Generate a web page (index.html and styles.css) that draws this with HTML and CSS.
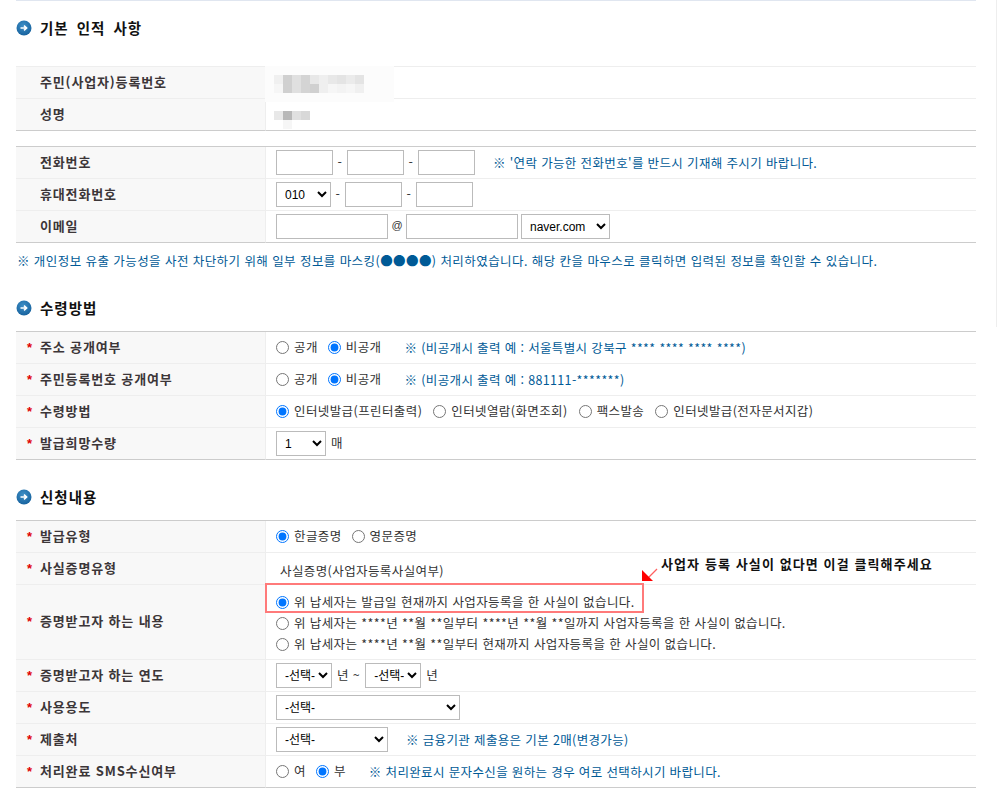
FILE: index.html
```html
<!DOCTYPE html>
<html lang="ko">
<head>
<meta charset="utf-8">
<title>증명 발급 신청</title>
<link rel="stylesheet" href="styles.css">
</head>
<body>
<div class="edge"></div>
<main class="page">
  <svg class="defs" width="0" height="0" aria-hidden="true">
    <defs>
      <radialGradient id="ball" cx="45%" cy="35%" r="70%">
        <stop offset="0" stop-color="#3f8fc6"/>
        <stop offset="1" stop-color="#14609c"/>
      </radialGradient>
      <symbol id="go" viewBox="0 0 16 16">
        <circle cx="8" cy="8" r="7.5" fill="url(#ball)"/>
        <path d="M4.5 8h5.5M8 5.6 10.6 8 8 10.4" fill="none" stroke="#fff" stroke-width="1.6"/>
      </symbol>
    </defs>
  </svg>

  <div class="heading first"><svg class="ico"><use href="#go"/></svg><h2>기본 인적 사항</h2></div>
  <table class="form top-light">
    <tr><th class="plain">주민(사업자)등록번호</th><td class="masked">
      <div class="halo"></div>
      <div class="mosaic">
        <i class="g0"></i><i class="g1"></i><i class="g2"></i><i class="g3"></i><i class="g4"></i><i class="g5"></i><i class="g4"></i><i class="g6"></i><i class="g7"></i><i class="g6"></i>
        <i class="g8"></i><i class="g1"></i><i class="g2"></i><i class="g3"></i><i class="g1"></i><i class="g5"></i><i class="g8"></i><i class="g9"></i><i class="g8"></i><i class="g0"></i>
      </div></td></tr>
    <tr><th class="plain">성명</th><td class="masked low">
      <div class="mosaic name">
        <i class="g4"></i><i class="ga"></i><i class="g2"></i><i class="gb"></i>
        <i class="gw"></i><i class="g8"></i><i class="gw"></i><i class="gw"></i>
      </div></td></tr>
  </table>

  <table class="form second">
    <tr><th class="plain">전화번호</th><td><div class="line">
      <input class="box w57" type="text"><span class="sep">-</span><input class="box w57" type="text"><span class="sep">-</span><input class="box w57" type="text">
      <span class="note n18">※ '연락 가능한 전화번호'를 반드시 기재해 주시기 바랍니다.</span></div></td></tr>
    <tr><th class="plain">휴대전화번호</th><td><div class="line">
      <select class="box w55"><option>010</option></select><span class="sep">-</span><input class="box w57" type="text"><span class="sep">-</span><input class="box w57" type="text"></div></td></tr>
    <tr><th class="plain">이메일</th><td><div class="line">
      <input class="box w112" type="text"><span class="at">@</span><input class="box w112" type="text"><select class="box w89 mail"><option>naver.com</option></select></div></td></tr>
  </table>
  <p class="notice">※ 개인정보 유출 가능성을 사전 차단하기 위해 일부 정보를 마스킹(●●●●) 처리하였습니다. 해당 칸을 마우스로 클릭하면 입력된 정보를 확인할 수 있습니다.</p>

  <div class="heading"><svg class="ico"><use href="#go"/></svg><h2>수령방법</h2></div>
  <table class="form">
    <tr><th><b class="req">*</b>주소 공개여부</th><td><div class="line">
      <input class="rd" type="radio" name="a"><label>공개</label><input class="rd" type="radio" name="a" checked><label>비공개</label>
      <span class="note n13">※ (비공개시 출력 예 : 서울특별시 강북구 **** **** **** ****)</span></div></td></tr>
    <tr><th><b class="req">*</b>주민등록번호 공개여부</th><td><div class="line">
      <input class="rd" type="radio" name="b"><label>공개</label><input class="rd" type="radio" name="b" checked><label>비공개</label>
      <span class="note n13">※ (비공개시 출력 예 : 881111-*******)</span></div></td></tr>
    <tr><th><b class="req">*</b>수령방법</th><td><div class="line spread">
      <input class="rd" type="radio" name="c" checked><label>인터넷발급(프린터출력)</label><input class="rd" type="radio" name="c"><label>인터넷열람(화면조회)</label><input class="rd" type="radio" name="c"><label>팩스발송</label><input class="rd" type="radio" name="c"><label>인터넷발급(전자문서지갑)</label></div></td></tr>
    <tr><th><b class="req">*</b>발급희망수량</th><td><div class="line">
      <select class="box w50"><option>1</option></select><span class="unit">매</span></div></td></tr>
  </table>

  <div class="heading third"><svg class="ico"><use href="#go"/></svg><h2>신청내용</h2></div>
  <table class="form">
    <tr><th><b class="req">*</b>발급유형</th><td><div class="line">
      <input class="rd" type="radio" name="d" checked><label>한글증명</label><input class="rd" type="radio" name="d"><label>영문증명</label></div></td></tr>
    <tr><th><b class="req">*</b>사실증명유형</th><td><div class="line fixed">사실증명(사업자등록사실여부)</div></td></tr>
    <tr class="tall"><th><b class="req">*</b>증명받고자 하는 내용</th><td class="anchor">
      <div class="stack">
        <div class="line"><input class="rd" type="radio" name="e" checked><label>위 납세자는 발급일 현재까지 사업자등록을 한 사실이 없습니다.</label></div>
        <div class="line"><input class="rd" type="radio" name="e"><label>위 납세자는 ****년 **월 **일부터 ****년 **월 **일까지 사업자등록을 한 사실이 없습니다.</label></div>
        <div class="line"><input class="rd" type="radio" name="e"><label>위 납세자는 ****년 **월 **일부터 현재까지 사업자등록을 한 사실이 없습니다.</label></div>
      </div>
      <div class="redbox"></div>
      <svg class="arrow" width="20" height="20" viewBox="0 0 20 20"><path d="M6 14 17 3" stroke="#ff6060" stroke-width="1.2"/><path d="M2 4v11h11z" fill="#ff0000"/></svg>
      <strong class="callout">사업자 등록 사실이 없다면 이걸 클릭해주세요</strong>
    </td></tr>
    <tr><th><b class="req">*</b>증명받고자 하는 연도</th><td><div class="line">
      <select class="box w56"><option>-선택-</option></select><span class="unit">년 ~</span><select class="box w56"><option>-선택-</option></select><span class="unit">년</span></div></td></tr>
    <tr><th><b class="req">*</b>사용용도</th><td><div class="line"><select class="box w184"><option>-선택-</option></select></div></td></tr>
    <tr><th><b class="req">*</b>제출처</th><td><div class="line"><select class="box w112"><option>-선택-</option></select>
      <span class="note n18">※ 금융기관 제출용은 기본 2매(변경가능)</span></div></td></tr>
    <tr><th><b class="req">*</b>처리완료 SMS수신여부</th><td><div class="line">
      <input class="rd" type="radio" name="f"><label>여</label><input class="rd" type="radio" name="f" checked><label>부</label>
      <span class="note n13">※ 처리완료시 문자수신을 원하는 경우 여로 선택하시기 바랍니다.</span></div></td></tr>
  </table>
</main>
</body>
</html>
```
FILE: styles.css
```css
* { box-sizing: border-box; }
html, body { margin: 0; padding: 0; background: #fff; overflow: hidden; }
body { font-family: "Noto Sans CJK KR", "Liberation Sans", sans-serif; font-size: 12px; color: #333; height: 790px; position: relative; }
.edge { position: absolute; right: 0; top: 0; width: 1px; height: 327px; background: #eeeeee; }
.page { width: 960px; margin-left: 16px; border-top: 1px solid #e0e6f0; }
.defs { position: absolute; }

.heading { display: flex; align-items: center; height: 30px; margin: 0 0 8px; }
.heading.first { margin: 12px 0 23px; }
.heading.third { margin-top: 22px; }
.ico { width: 16px; height: 16px; flex: none; margin-right: 8px; }
h2 { margin: 0; font-size: 14.5px; font-weight: 700; color: #111; letter-spacing: 1px; word-spacing: 3px; line-height: 20px; }

.form { width: 960px; table-layout: fixed; border-collapse: separate; border-spacing: 0; border-top: 1px solid #ccc; }
.form.top-light { border-top-color: #eee; }
.form.second { margin-top: 15px; }
.form th { width: 250px; height: 32px; padding: 0 0 3px 11px; background: #f8f8f8; border-right: 1px solid #eee; border-bottom: 1px solid #eee; text-align: left; font-size: 13px; font-weight: 700; color: #3c3638; letter-spacing: .85px; white-space: nowrap; }
.form th.plain { padding-left: 24px; }
.form td { height: 32px; padding: 0 0 0 10px; border-bottom: 1px solid #eee; vertical-align: middle; white-space: nowrap; }
.form tr:last-child th, .form tr:last-child td { border-bottom-color: #ccc; }
.form tr.tall th, .form tr.tall td { height: 75px; }

.req { display: inline-block; width: 13px; color: #e00000; font-family: "Liberation Sans", sans-serif; font-size: 13px; font-weight: 700; letter-spacing: 0; line-height: 12px; }

.line { display: flex; align-items: center; height: 25px; font-size: 12.5px; letter-spacing: .4px; color: #333; }
.line label { margin: -2px 10px 0 5px; }
.line.spread label { margin-right: 11px; }
.rd { width: 13px; height: 13px; margin: 0; flex: none; }
.fixed { padding: 3px 0 0 4px; }

.box { height: 25px; border: 1px solid #bbb; background: #fff; border-radius: 0; padding: 0 0 0 4px; font-family: "Liberation Sans", "Noto Sans CJK KR", sans-serif; font-size: 12px; color: #000; margin: 0; flex: none; letter-spacing: 0; }
.w50 { width: 50px; }
.w55 { width: 55px; }
.w56 { width: 56px; }
.w57 { width: 57px; }
.w89 { width: 89px; }
.w112 { width: 112px; }
.w184 { width: 184px; }
.mail { margin-left: 3px; }
.sep { width: 14px; text-align: center; margin-top: -3px; color: #333; }
.at { width: 18px; text-align: center; font-family: "Liberation Sans", sans-serif; font-size: 11px; margin-top: -3px; letter-spacing: 0; }
.unit { margin: -2px 5px 0 5px; }
.note { color: #005a96; font-size: 12.5px; letter-spacing: .36px; }
.n18 { margin-left: 18px; }
.n13 { margin-left: 13px; }
.notice { margin: 9px 0 23px 1px; height: 18px; line-height: 18px; color: #005a96; font-size: 12.5px; letter-spacing: .43px; white-space: nowrap; }

.form td.masked { position: relative; padding: 8px 0 0 8px; vertical-align: top; }
.form td.masked.low { padding-top: 12px; }
.halo { position: absolute; left: -1px; top: -1px; width: 129px; height: 36px; background: #fcfcfc; }
.mosaic { position: relative; display: grid; grid-template-columns: repeat(10, 9px); grid-auto-rows: 9px; }
.mosaic.name { grid-template-columns: repeat(4, 9px); }
.mosaic i { display: block; }
.g0 { background: #f0f0f0; }
.g1 { background: #d0d0d0; }
.g2 { background: #e0e0e0; }
.g3 { background: #d4d4d4; }
.g4 { background: #e8e8e8; }
.g5 { background: #efefef; }
.g6 { background: #e4e4e4; }
.g7 { background: #ebebeb; }
.g8 { background: #f6f6f6; }
.g9 { background: #f3f3f3; }
.ga { background: #b8b8b8; }
.gb { background: #d8d8d8; }
.gw { background: transparent; }

.anchor { position: relative; }
.stack { display: flex; flex-direction: column; padding-top: 3px; }
.stack .line { height: 21px; }
.redbox { position: absolute; left: -1px; top: -2px; width: 379px; height: 30px; border: 2px solid #ff7a7a; pointer-events: none; }
.arrow { position: absolute; left: 374px; top: -19px; }
.callout { position: absolute; left: 395px; top: -30px; font-size: 13px; font-weight: 700; color: #111; letter-spacing: 1.1px; line-height: 18px; }
```
